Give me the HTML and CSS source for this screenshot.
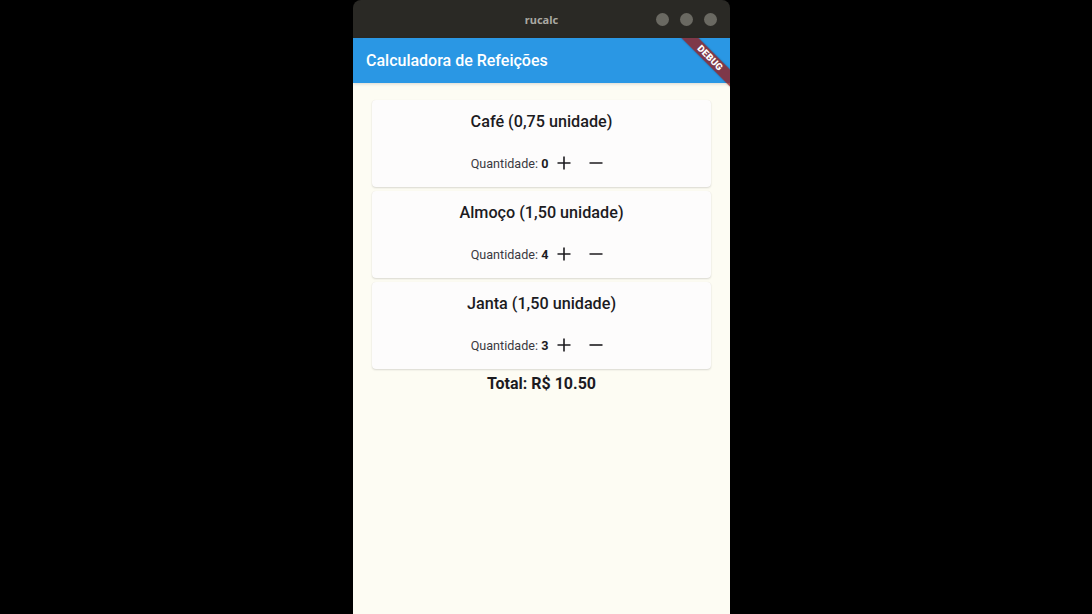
FILE: index.html
```html
<!DOCTYPE html>
<html>
<head>
<meta charset="utf-8">
<link rel="stylesheet" href="styles.css">
</head>
<body>
<div class="window">
  <div class="titlebar">
    <span class="wtitle">rucalc</span>
    <div class="wbtns"><span class="dot"></span><span class="dot"></span><span class="dot"></span></div>
  </div>
  <div class="app">
    <div class="appbar">Calculadora de Refeições</div>
    <div class="content">
      <div class="card">
        <div class="ctitle">Café (0,75 unidade)</div>
        <div class="row">
          <span class="qlabel">Quantidade: <b>0</b></span>
          <span class="ibtn"><svg width="16" height="16" viewBox="0 0 16 16"><path d="M8 1.5v13M1.5 8h13" stroke="#1c1b1f" stroke-width="1.6" fill="none"/></svg></span>
          <span class="ibtn"><svg width="16" height="16" viewBox="0 0 16 16"><path d="M1.5 8h13" stroke="#1c1b1f" stroke-width="1.6" fill="none"/></svg></span>
        </div>
      </div>
      <div class="card">
        <div class="ctitle">Almoço (1,50 unidade)</div>
        <div class="row">
          <span class="qlabel">Quantidade: <b>4</b></span>
          <span class="ibtn"><svg width="16" height="16" viewBox="0 0 16 16"><path d="M8 1.5v13M1.5 8h13" stroke="#1c1b1f" stroke-width="1.6" fill="none"/></svg></span>
          <span class="ibtn"><svg width="16" height="16" viewBox="0 0 16 16"><path d="M1.5 8h13" stroke="#1c1b1f" stroke-width="1.6" fill="none"/></svg></span>
        </div>
      </div>
      <div class="card">
        <div class="ctitle">Janta (1,50 unidade)</div>
        <div class="row">
          <span class="qlabel">Quantidade: <b>3</b></span>
          <span class="ibtn"><svg width="16" height="16" viewBox="0 0 16 16"><path d="M8 1.5v13M1.5 8h13" stroke="#1c1b1f" stroke-width="1.6" fill="none"/></svg></span>
          <span class="ibtn"><svg width="16" height="16" viewBox="0 0 16 16"><path d="M1.5 8h13" stroke="#1c1b1f" stroke-width="1.6" fill="none"/></svg></span>
        </div>
      </div>
      <div class="total">Total: R$ 10.50</div>
    </div>
    <div class="banner-clip"><div class="banner">DEBUG</div></div>
  </div>
</div>
</body>
</html>
```
FILE: styles.css
```css
html, body {
  margin: 0;
  padding: 0;
  background: #000;
  height: 614px;
  overflow: hidden;
}
.window {
  margin-left: 353px;
  width: 377px;
  height: 614px;
  display: flex;
  flex-direction: column;
  border-radius: 8px 8px 0 0;
  overflow: hidden;
  font-family: Roboto, "Liberation Sans", sans-serif;
}
.titlebar {
  height: 38px;
  flex: none;
  background: #2a2925;
  position: relative;
  display: flex;
  align-items: center;
  justify-content: center;
}
.wtitle {
  font-family: "Noto Sans", sans-serif;
  font-weight: bold;
  font-size: 11px;
  color: #a9a8a2;
}
.wbtns {
  position: absolute;
  right: 13px;
  top: 13px;
  display: flex;
  gap: 11px;
}
.dot {
  width: 13px;
  height: 13px;
  border-radius: 50%;
  background: #6a6962;
}
.app {
  flex: 1;
  position: relative;
  background: #fdfcf3;
  display: flex;
  flex-direction: column;
}
.appbar {
  height: 45px;
  flex: none;
  background: #2a97e4;
  color: #fff;
  font-size: 16px;
  font-weight: 500;
  display: flex;
  align-items: center;
  padding-left: 13px;
  box-shadow: 0 1px 3px rgba(0,0,0,0.15);
}
.content {
  padding: 17px 19px 0 19px;
  display: flex;
  flex-direction: column;
  gap: 4px;
}
.card {
  background: #fdfcfc;
  border-radius: 4px;
  box-shadow: 0 1px 2px rgba(0,0,0,0.14), 0 0 1px rgba(0,0,0,0.06);
  height: 87px;
  display: flex;
  flex-direction: column;
  align-items: center;
  padding-top: 12px;
  box-sizing: border-box;
}
.ctitle {
  font-size: 16.2px;
  font-weight: 500;
  line-height: 20px;
  color: #1c1b1f;
}
.row {
  margin-top: 7px;
  height: 48px;
  display: flex;
  align-items: center;
  justify-content: center;
}
.qlabel {
  font-size: 12.6px;
  color: #3a3940;
}
.qlabel b {
  font-weight: bold;
  color: #1c1b1f;
}
.ibtn {
  width: 32px;
  height: 32px;
  display: flex;
  align-items: center;
  justify-content: center;
}
.total {
  text-align: center;
  font-size: 16px;
  font-weight: bold;
  color: #1c1b1f;
  line-height: 20px;
  margin-top: 1px;
}
.banner-clip {
  position: absolute;
  right: 0;
  top: 0;
  width: 60px;
  height: 60px;
  overflow: hidden;
  pointer-events: none;
}
.banner {
  position: absolute;
  width: 80px;
  height: 12px;
  left: 0;
  top: 14px;
  transform: rotate(45deg);
  background: rgba(150, 30, 30, 0.78);
  color: #fff;
  font-size: 9.5px;
  font-weight: 900;
  line-height: 12px;
  text-align: center;
  letter-spacing: 0.2px;
  box-shadow: 0 0 2px rgba(0,0,0,0.3);
}
```
